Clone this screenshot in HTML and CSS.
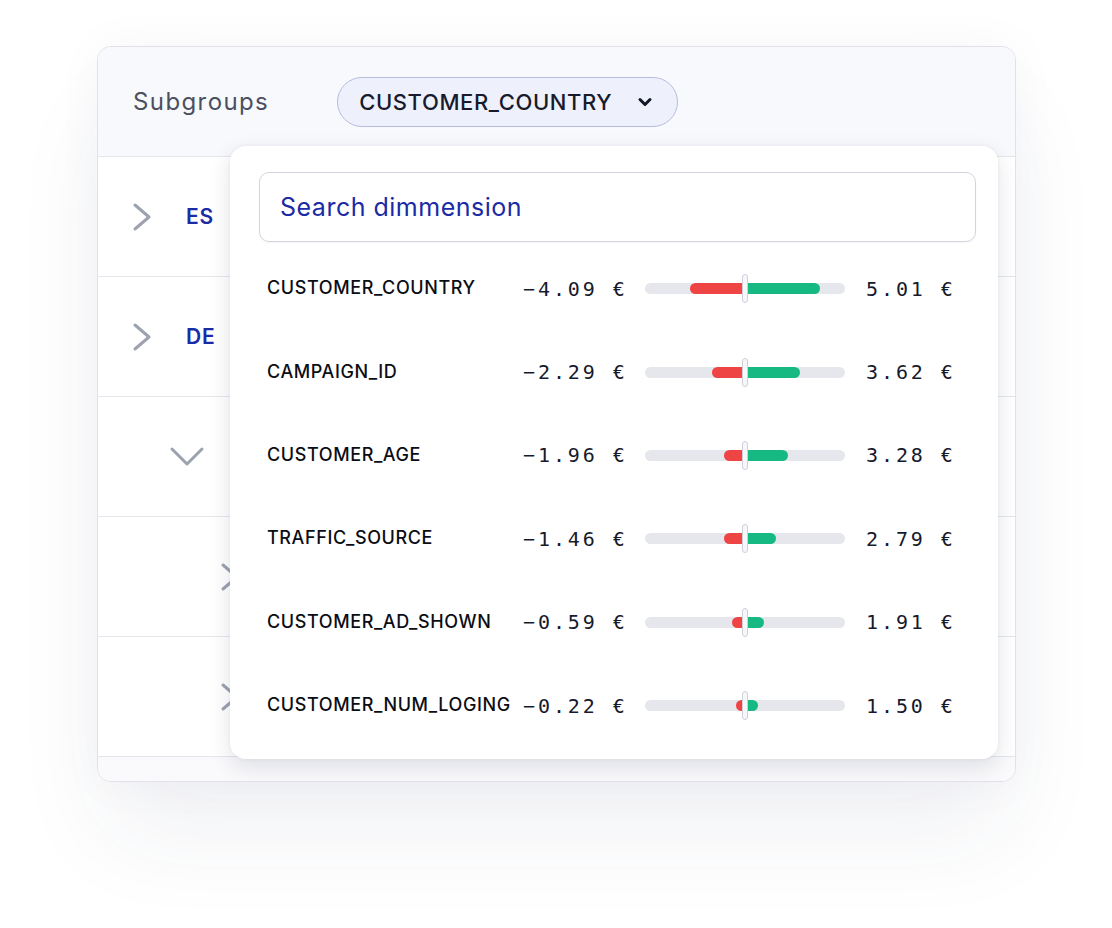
FILE: index.html
```html
<!DOCTYPE html>
<html lang="en">
<head>
<meta charset="utf-8">
<title>Subgroups</title>
<link rel="stylesheet" href="styles.css">
</head>
<body>
<div class="stage">
  <div class="card">
    <div class="header">
      <span class="header-label">Subgroups</span>
      <button class="pill">
        <span>CUSTOMER_COUNTRY</span>
        <svg class="pill-chev" width="16" height="12" viewBox="0 0 16 12"><polyline points="3,3.5 8,8.5 13,3.5" fill="none" stroke="#111827" stroke-width="3" stroke-linecap="round" stroke-linejoin="round"/></svg>
      </button>
    </div>
    <div class="row">
      <svg class="chev-right" width="22" height="30" viewBox="0 0 22 30"><polyline points="3,3 17,15 3,27" fill="none" stroke="#9ca3af" stroke-width="3" stroke-linecap="round" stroke-linejoin="round"/></svg>
      <span class="country">ES</span>
    </div>
    <div class="row">
      <svg class="chev-right" width="22" height="30" viewBox="0 0 22 30"><polyline points="3,3 17,15 3,27" fill="none" stroke="#9ca3af" stroke-width="3" stroke-linecap="round" stroke-linejoin="round"/></svg>
      <span class="country">DE</span>
    </div>
    <div class="row row-l2">
      <svg class="chev-down" width="36" height="22" viewBox="0 0 36 22"><polyline points="3,3 18,18 33,3" fill="none" stroke="#9ca3af" stroke-width="3" stroke-linecap="round" stroke-linejoin="round"/></svg>
    </div>
    <div class="row row-l3">
      <svg class="chev-right" width="22" height="30" viewBox="0 0 22 30"><polyline points="3,3 17,15 3,27" fill="none" stroke="#9ca3af" stroke-width="3" stroke-linecap="round" stroke-linejoin="round"/></svg>
    </div>
    <div class="row row-l3">
      <svg class="chev-right" width="22" height="30" viewBox="0 0 22 30"><polyline points="3,3 17,15 3,27" fill="none" stroke="#9ca3af" stroke-width="3" stroke-linecap="round" stroke-linejoin="round"/></svg>
    </div>
    <div class="row row-last"></div>

    <div class="popup">
      <div class="search">Search dimmension</div>
      <ul class="dims">
        <li class="dim">
          <span class="dim-name">CUSTOMER_COUNTRY</span>
          <span class="val neg">−4.09 €</span>
          <span class="track"><span class="bar red" style="width:55px"></span><span class="bar green" style="width:75px"></span><span class="thumb"></span></span>
          <span class="val pos">5.01 €</span>
        </li>
        <li class="dim">
          <span class="dim-name">CAMPAIGN_ID</span>
          <span class="val neg">−2.29 €</span>
          <span class="track"><span class="bar red" style="width:33px"></span><span class="bar green" style="width:55px"></span><span class="thumb"></span></span>
          <span class="val pos">3.62 €</span>
        </li>
        <li class="dim">
          <span class="dim-name">CUSTOMER_AGE</span>
          <span class="val neg">−1.96 €</span>
          <span class="track"><span class="bar red" style="width:21px"></span><span class="bar green" style="width:43px"></span><span class="thumb"></span></span>
          <span class="val pos">3.28 €</span>
        </li>
        <li class="dim">
          <span class="dim-name">TRAFFIC_SOURCE</span>
          <span class="val neg">−1.46 €</span>
          <span class="track"><span class="bar red" style="width:21px"></span><span class="bar green" style="width:31px"></span><span class="thumb"></span></span>
          <span class="val pos">2.79 €</span>
        </li>
        <li class="dim">
          <span class="dim-name">CUSTOMER_AD_SHOWN</span>
          <span class="val neg">−0.59 €</span>
          <span class="track"><span class="bar red" style="width:13px"></span><span class="bar green" style="width:19px"></span><span class="thumb"></span></span>
          <span class="val pos">1.91 €</span>
        </li>
        <li class="dim">
          <span class="dim-name">CUSTOMER_NUM_LOGING</span>
          <span class="val neg">−0.22 €</span>
          <span class="track"><span class="bar red" style="width:9px"></span><span class="bar green" style="width:13px"></span><span class="thumb"></span></span>
          <span class="val pos">1.50 €</span>
        </li>
      </ul>
    </div>
  </div>
</div>
</body>
</html>
```

FILE: styles.css
```css
* { box-sizing: border-box; }

html, body {
  margin: 0;
  padding: 0;
  background: #ffffff;
}

body {
  font-family: Inter, "Noto Sans", "Liberation Sans", sans-serif;
  color: #111827;
}

.stage {
  min-height: 928px;
  padding: 46px 0 0 97px;
}

.card {
  position: relative;
  width: 919px;
  height: 736px;
  border: 1px solid #e0e1e9;
  border-radius: 14px;
  background: #ffffff;
  overflow: hidden;
  box-shadow: 0 60px 100px -10px rgba(40, 50, 100, 0.07), 0 0 50px rgba(40, 50, 100, 0.04);
}

.header {
  height: 110px;
  display: flex;
  align-items: center;
  padding-left: 35px;
  background: #f8f9fc;
  border-bottom: 1px solid #e5e6ec;
}

.header-label {
  font-size: 24px;
  color: #4b5060;
  letter-spacing: 1.4px;
}

.pill {
  margin-left: 68px;
  height: 50px;
  width: 341px;
  display: flex;
  align-items: center;
  justify-content: space-between;
  padding: 0 24px 0 21px;
  background: #eef0fc;
  border: 1.5px solid #b7bbdc;
  border-radius: 25px;
  font-family: Inter, "Noto Sans", "Liberation Sans", sans-serif;
  font-size: 22px;
  font-weight: 500;
  color: #171b2b;
  letter-spacing: 0.6px;
}

.row {
  height: 120px;
  display: flex;
  align-items: center;
  padding-left: 34px;
  border-bottom: 1px solid #e5e6ec;
}

.row-l2 { padding-left: 71px; }
.row-l3 { padding-left: 122px; }
.row-last { border-bottom: none; height: 24px; background: #fafafc; }

.chev-right { flex: none; }
.chev-down { flex: none; }

.country {
  margin-left: 32px;
  font-size: 21px;
  font-weight: 600;
  color: #1b2aa6;
  letter-spacing: 0.8px;
}

.popup {
  position: absolute;
  left: 132px;
  top: 99px;
  width: 768px;
  height: 613px;
  background: #ffffff;
  border-radius: 16px;
  box-shadow: 0 8px 22px rgba(30, 35, 70, 0.13), 0 0 4px rgba(30, 35, 70, 0.05);
  padding: 26px 22px 0 29px;
}

.search {
  height: 70px;
  border: 1.5px solid #d3d5de;
  border-radius: 10px;
  display: flex;
  align-items: center;
  padding-left: 20px;
  font-size: 25px;
  letter-spacing: 0.5px;
  color: #1b2aa6;
  box-shadow: 0 1px 2px rgba(0, 0, 0, 0.04);
}

.dims {
  list-style: none;
  margin: 5px 0 0 0;
  padding: 0 0 0 8px;
}

.dim {
  height: 83.4px;
  display: flex;
  align-items: center;
}

.dim-name {
  width: 256px;
  flex: none;
  font-size: 18px;
  font-weight: 500;
  color: #0b0d14;
  letter-spacing: 0.6px;
  margin-top: -2px;
  white-space: nowrap;
}

.val {
  font-family: "DejaVu Sans Mono", "Liberation Mono", monospace;
  font-size: 20px;
  letter-spacing: 2.9px;
  color: #161a2c;
  white-space: nowrap;
}

.val.neg {
  width: 122px;
  flex: none;
}

.val.pos {
  margin-left: 21px;
}

.track {
  position: relative;
  width: 200px;
  height: 11px;
  flex: none;
  border-radius: 6px;
  background: #e6e7ec;
  display: block;
}

.bar {
  position: absolute;
  top: 0;
  height: 11px;
  display: block;
}

.bar.red {
  right: 100px;
  background: #ef4444;
  border-radius: 6px 0 0 6px;
}

.bar.green {
  left: 100px;
  background: #16b981;
  border-radius: 0 6px 6px 0;
}

.thumb {
  position: absolute;
  left: 97px;
  top: -9px;
  width: 6px;
  height: 29px;
  background: #f7f7fa;
  border: 1.5px solid #cfd1da;
  border-radius: 3px;
  display: block;
}
```
